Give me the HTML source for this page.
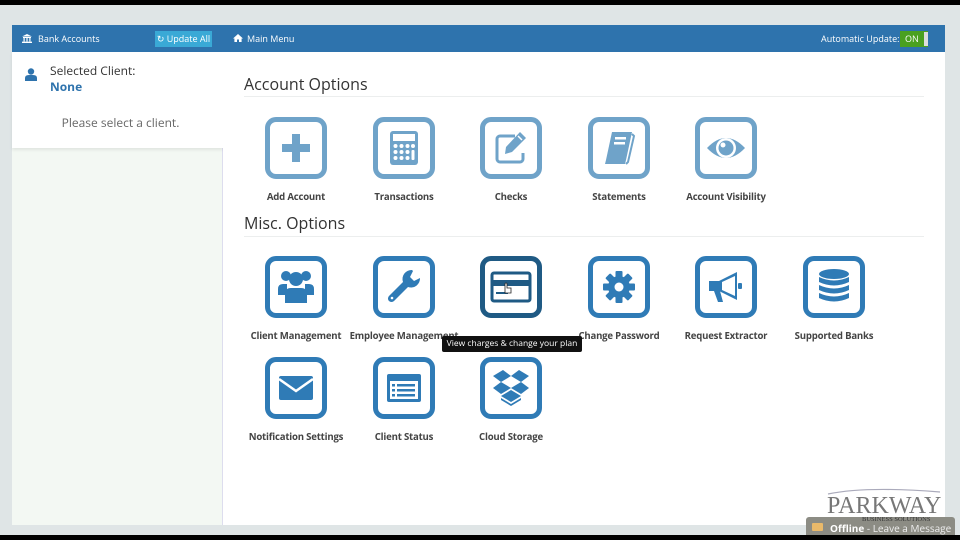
<!DOCTYPE html>
<html><head><meta charset="utf-8"><style>
*{margin:0;padding:0;box-sizing:border-box}
body{width:960px;height:540px;overflow:hidden;background:#dfe5e6;font-family:"Open Sans","Liberation Sans",sans-serif;position:relative}
.blk{position:absolute;left:0;width:960px;background:#000}
.abs{position:absolute}
.hdr{background:#2e73ad;color:#fff;font-size:9px;height:27px;top:25px}
.ic{position:absolute;width:62px;height:62px;border:5px solid #6fa3c9;border-radius:11px;background:#fff}
.ic.d{border-color:#2f7bb6}
.ic svg{position:absolute;left:0;top:0;width:52px;height:52px}
.lb{position:absolute;width:130px;text-align:center;font-size:9.6px;font-weight:bold;color:#444;letter-spacing:-0.2px}
h2{position:absolute;font-weight:normal;font-size:16px;color:#333}
.hr{position:absolute;left:244px;width:680px;height:1px;background:#eceeee}
</style></head><body>
<div class="blk" style="top:0;height:5px"></div>
<div class="blk" style="top:535px;height:5px"></div>

<div class="abs" style="left:12px;top:25px;width:211px;height:500px;background:#f3f8f3;border-right:1px solid #dde"></div>
<div class="abs hdr" style="left:12px;width:211px;">
 <svg class="abs" style="left:10px;top:9px" width="10" height="9" viewBox="0 0 10 9"><path d="M0 2.5L5 0 10 2.5ZM1 3h8v1H1zM1.5 4h1.2v3.5H1.5zM4.4 4h1.2v3.5H4.4zM7.3 4h1.2v3.5H7.3zM0 7.6h10V9H0z" fill="#fff"/></svg>
 <span class="abs" style="left:26px;top:7px">Bank Accounts</span>
 <div class="abs" style="left:143px;top:6px;width:57px;height:16px;background:#3aa9d6;font-size:9px;line-height:16px;text-align:center;color:#fff">&#x21bb; Update All</div>
</div>
<div class="abs" style="left:12px;top:52px;width:211px;height:96px;background:#fff;box-shadow:0 2px 3px rgba(0,0,0,.08)">
 <svg class="abs" style="left:13px;top:16px" width="12" height="13" viewBox="0 0 12 13"><circle cx="6" cy="3.5" r="3.2" fill="#2e73ad"/><path d="M0 13V10Q0 7 4 7H8Q12 7 12 10V13Z" fill="#2e73ad"/></svg>
 <div class="abs" style="left:38px;top:10px;font-size:12px;color:#333">Selected Client:</div>
 <div class="abs" style="left:38px;top:26px;font-size:12px;color:#2e73ad;font-weight:bold">None</div>
 <div class="abs" style="left:3px;width:211px;top:62px;text-align:center;font-size:12px;color:#666">Please select a client.</div>
</div>

<div class="abs" style="left:223px;top:25px;width:722px;height:500px;background:#fff"></div>
<div class="abs hdr" style="left:223px;width:722px;">
 <svg class="abs" style="left:10px;top:9px" width="10" height="8" viewBox="0 0 10 8"><path d="M5 0L10 4.5H8.6V8H6V5.5H4V8H1.4V4.5H0Z" fill="#fff"/></svg>
 <span class="abs" style="left:24px;top:7px">Main Menu</span>
 <span class="abs" style="left:598px;top:7px">Automatic Update:</span>
 <div class="abs" style="left:677px;top:6px;width:28px;height:16px;background:#4aa020;font-size:9px;line-height:16px;padding-left:5px">ON</div>
 <div class="abs" style="left:701px;top:7px;width:4px;height:14px;background:#ddd"></div>
</div>

<h2 style="left:244px;top:73px">Account Options</h2>
<div class="hr" style="top:96px"></div>
<h2 style="left:244px;top:212px">Misc. Options</h2>
<div class="hr" style="top:236px"></div>

<div class="ic" style="left:265px;top:117px"><svg viewBox="0 0 52 52"><path d="M22 12h8v10h10v8H30v10h-8V30H12v-8h10z" fill="#6fa3c9"/></svg></div>
<div class="ic" style="left:373px;top:117px"><svg viewBox="0 0 52 52"><rect x="12" y="9" width="28" height="34" rx="3" fill="#6fa3c9"/><rect x="15" y="12" width="22" height="7" fill="#fff"/><g fill="#fff"><circle cx="17.5" cy="24" r="2"/><circle cx="23.5" cy="24" r="2"/><circle cx="29.5" cy="24" r="2"/><circle cx="35" cy="24" r="2"/><circle cx="17.5" cy="30" r="2"/><circle cx="23.5" cy="30" r="2"/><circle cx="29.5" cy="30" r="2"/><circle cx="17.5" cy="36" r="2"/><circle cx="23.5" cy="36" r="2"/><circle cx="29.5" cy="36" r="2"/><rect x="33.5" y="28" width="3" height="10" rx="1"/></g></svg></div>
<div class="ic" style="left:480px;top:117px"><svg viewBox="0 0 52 52"><path d="M30 14H15a3 3 0 0 0-3 3v20a3 3 0 0 0 3 3h20a3 3 0 0 0 3-3v-6" fill="none" stroke="#6fa3c9" stroke-width="3"/><path d="M35 10l6 6-14 14-7 2 1-7z" fill="#6fa3c9"/><path d="M33 14l4 4" stroke="#fff" stroke-width="1.5"/></svg></div>
<div class="ic" style="left:588px;top:117px"><svg viewBox="0 0 52 52"><path d="M19 10h20l-6 28H13z" fill="#6fa3c9"/><path d="M13 38h20l-1 4H12z" fill="#6fa3c9"/><path d="M39 12l2 2-6 26-2 2" fill="none" stroke="#6fa3c9" stroke-width="2"/><rect x="22" y="15" width="11" height="2.5" fill="#fff"/><rect x="21" y="20" width="11" height="2.5" fill="#fff"/></svg></div>
<div class="ic" style="left:695px;top:117px"><svg viewBox="0 0 52 52"><path d="M7 26Q26 6 45 26Q26 46 7 26Z" fill="#6fa3c9"/><circle cx="26" cy="26" r="10" fill="#fff"/><circle cx="26" cy="26" r="7.5" fill="#6fa3c9"/><circle cx="23" cy="23" r="2.5" fill="#fff"/></svg></div>
<div class="lb" style="left:231px;top:190px">Add Account</div>
<div class="lb" style="left:339px;top:190px">Transactions</div>
<div class="lb" style="left:446px;top:190px">Checks</div>
<div class="lb" style="left:554px;top:190px">Statements</div>
<div class="lb" style="left:661px;top:190px">Account Visibility</div>

<div class="ic d" style="left:265px;top:256px"><svg viewBox="0 0 52 52"><g fill="#2f7bb6"><circle cx="16" cy="15" r="5"/><circle cx="36" cy="15" r="5"/><circle cx="26" cy="18" r="7"/><path d="M8 34v-6q0-5 5-5h4v11z"/><path d="M44 34v-6q0-5-5-5h-4v11z"/><path d="M15 42V33q0-6 6-6h10q6 0 6 6v9z"/></g></svg></div>
<div class="ic d" style="left:373px;top:256px"><svg viewBox="0 0 52 52"><path d="M34 9a9 9 0 0 0-9 12L11 35a3.5 3.5 0 0 0 5 5L30 26a9 9 0 0 0 12-9l-6 3-4-4 3-6a9 9 0 0 0-1-1z" fill="#2f7bb6"/><circle cx="14" cy="37" r="1.3" fill="#fff"/></svg></div>
<div class="ic d" style="left:480px;top:256px;border-color:#1f5a84"><svg viewBox="0 0 52 52"><rect x="7" y="12" width="38" height="28" rx="2" fill="#fff" stroke="#1f5a84" stroke-width="3"/><rect x="8" y="19" width="36" height="6" fill="#1f5a84"/><rect x="11" y="31" width="12" height="2" fill="#1f5a84"/><path d="M20 29v-6a1 1 0 0 1 2 0v4h4v5h-6z" fill="#fff" stroke="#222" stroke-width="0.8"/></svg></div>
<div class="ic d" style="left:588px;top:256px"><svg viewBox="0 0 52 52"><g fill="#2f7bb6" transform="translate(26 26)"><circle r="11"/><rect x="-3.5" y="-16" width="7" height="32" rx="1"/><rect x="-3.5" y="-16" width="7" height="32" rx="1" transform="rotate(45)"/><rect x="-3.5" y="-16" width="7" height="32" rx="1" transform="rotate(90)"/><rect x="-3.5" y="-16" width="7" height="32" rx="1" transform="rotate(135)"/></g><circle cx="26" cy="26" r="4.5" fill="#fff"/></svg></div>
<div class="ic d" style="left:695px;top:256px"><svg viewBox="0 0 52 52"><g fill="#2f7bb6"><path d="M9 20h10l18-9v28l-18-9H9z"/><path d="M14 30h6l3 11h-5z"/><rect x="38" y="22" width="4" height="6" rx="1"/></g><path d="M22 21l13-6v20l-13-6z" fill="#fff"/></svg></div>
<div class="ic d" style="left:803px;top:256px"><svg viewBox="0 0 52 52"><g fill="#2f7bb6"><ellipse cx="26" cy="13" rx="15" ry="5"/><path d="M11 16q15 7 30 0v5q-15 7-30 0z"/><path d="M11 24q15 7 30 0v5q-15 7-30 0z"/><path d="M11 32q15 7 30 0v5q-15 7-30 0z"/></g></svg></div>
<div class="lb" style="left:231px;top:329px">Client Management</div>
<div class="lb" style="left:339px;top:329px">Employee Management</div>
<div class="lb" style="left:554px;top:329px">Change Password</div>
<div class="lb" style="left:661px;top:329px">Request Extractor</div>
<div class="lb" style="left:769px;top:329px">Supported Banks</div>
<div class="abs" style="left:442px;top:336px;width:140px;height:16px;background:#111;color:#fff;font-size:8.5px;line-height:16px;text-align:center;border-radius:2px">View charges &amp; change your plan</div>

<div class="ic d" style="left:265px;top:357px"><svg viewBox="0 0 52 52"><rect x="9" y="14" width="34" height="24" rx="2" fill="#2f7bb6"/><path d="M9 17l17 12 17-12" fill="none" stroke="#fff" stroke-width="2.5"/></svg></div>
<div class="ic d" style="left:373px;top:357px"><svg viewBox="0 0 52 52"><rect x="9" y="12" width="34" height="28" rx="2" fill="#2f7bb6"/><rect x="12" y="19" width="28" height="18" fill="#fff"/><g fill="#2f7bb6"><rect x="14" y="22" width="3" height="2.5"/><rect x="19" y="22" width="18" height="2.5"/><rect x="14" y="27" width="3" height="2.5"/><rect x="19" y="27" width="18" height="2.5"/><rect x="14" y="32" width="3" height="2.5"/><rect x="19" y="32" width="18" height="2.5"/></g></svg></div>
<div class="ic d" style="left:480px;top:357px"><svg viewBox="0 0 52 52"><g fill="#2f7bb6"><path d="M18 8l-10 6 8 6 10-6z"/><path d="M34 8l10 6-8 6-10-6z"/><path d="M8 26l8-6 10 6-10 6z"/><path d="M44 26l-8-6-10 6 10 6z"/><path d="M16 34l10-6 10 6-10 6z"/><path d="M16 36l10 6 10-6v2l-10 6-10-6z"/></g></svg></div>
<div class="lb" style="left:231px;top:430px">Notification Settings</div>
<div class="lb" style="left:339px;top:430px">Client Status</div>
<div class="lb" style="left:446px;top:430px">Cloud Storage</div>

<svg class="abs" style="left:826px;top:488px" width="116" height="8" viewBox="0 0 116 8"><path d="M2 6Q40 -2 114 4" fill="none" stroke="#aab" stroke-width="1.2"/></svg>
<div class="abs" style="left:827px;top:494px;font-family:'Liberation Serif',serif;font-size:24px;color:#777;line-height:24px">PARKWAY</div>
<div class="abs" style="left:806px;top:517px;width:149px;height:18px;background:#8c8c84;border-radius:3px 3px 0 0"></div>
<div class="abs" style="left:862px;top:516px;font-family:'Liberation Serif',serif;font-size:6.5px;color:#333">BUSINESS SOLUTIONS</div>
<div class="abs" style="left:812px;top:523px;width:11px;height:8px;background:#e9b96a;border-radius:1px"></div>
<div class="abs" style="left:830px;top:521px;font-size:10px;color:#fff;font-weight:bold">Offline <span style="font-weight:normal;color:#eee">- Leave a Message</span></div>
</body></html>
